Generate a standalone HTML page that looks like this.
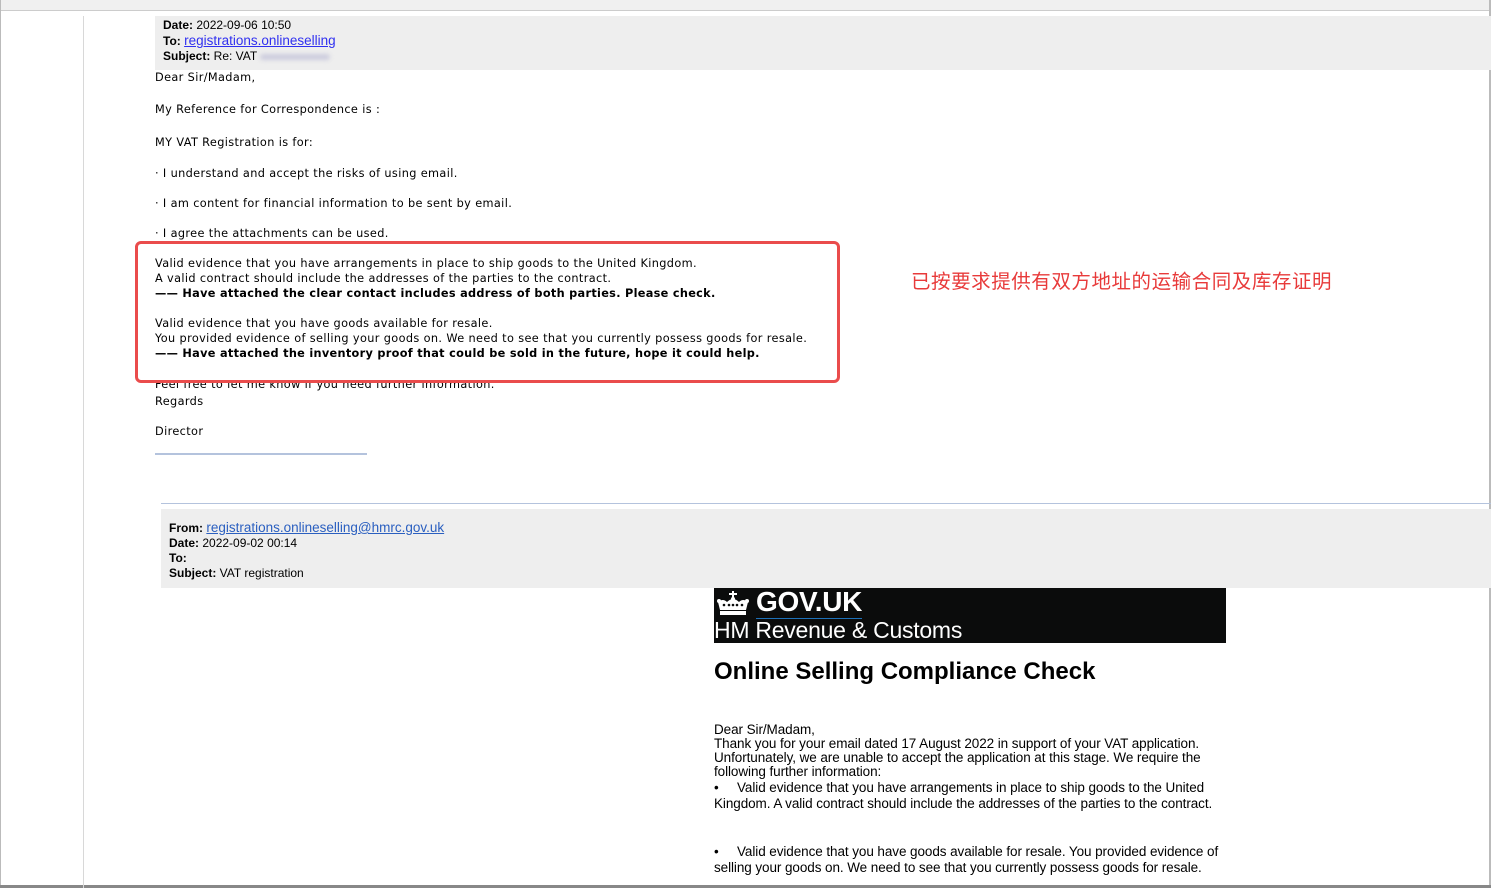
<!DOCTYPE html>
<html><head><meta charset="utf-8"><style>
*{margin:0;padding:0;box-sizing:border-box}
body{width:1491px;height:888px;position:relative;background:#fff;overflow:hidden;font-family:"Liberation Sans",sans-serif;color:#000}
.a{position:absolute;white-space:nowrap}
.t{font-size:12px}
.v{font-family:"DejaVu Sans",sans-serif;font-size:11.3px;letter-spacing:0.37px}
.ar{font-size:13.5px;letter-spacing:-0.08px}
a{text-decoration:underline}
</style></head><body>
<div class="a" style="left:0;top:0;width:1491px;height:10px;background:#f0f0f0"></div>
<div class="a" style="left:0;top:10px;width:1491px;height:1px;background:#ccc"></div>
<div class="a" style="left:0;top:0;width:1px;height:888px;background:#bbb"></div>
<div class="a" style="left:1489px;top:0;width:2px;height:888px;background:#bbb"></div>
<div class="a" style="left:0;top:885px;width:1491px;height:3px;background:#888"></div>
<div class="a" style="left:83px;top:16px;width:1px;height:872px;background:#d8d8d8"></div>
<div class="a" style="left:155px;top:16px;width:1336px;height:54px;background:#eee"></div>
<div class="a t" style="left:163px;top:18px"><b>Date:</b> 2022-09-06 10:50</div>
<div class="a t" style="left:163px;top:33px"><b>To:</b> <a style="color:#3030f0;font-size:13.5px">registrations.onlineselling</a></div>
<div class="a t" style="left:163px;top:49px"><b>Subject:</b> Re: VAT <span style="display:inline-block;width:70px;height:6px;background:#ccd;border-radius:3px;filter:blur(2px)"></span></div>
<div class="a v" style="left:155px;top:71px">Dear Sir/Madam,</div>
<div class="a v" style="left:155px;top:103px">My Reference for Correspondence is :</div>
<div class="a v" style="left:155px;top:136px">MY VAT Registration is for:</div>
<div class="a v" style="left:155px;top:167px">· I understand and accept the risks of using email.</div>
<div class="a v" style="left:155px;top:197px">· I am content for financial information to be sent by email.</div>
<div class="a v" style="left:155px;top:227px">· I agree the attachments can be used.</div>
<div class="a v" style="left:155px;top:378px">Feel free to let me know if you need further information.</div>
<div class="a" style="left:135px;top:241px;width:705px;height:142px;border:3px solid #ea4c4c;border-radius:6px;background:#fff"></div>
<div class="a v" style="left:155px;top:257px">Valid evidence that you have arrangements in place to ship goods to the United Kingdom.</div>
<div class="a v" style="left:155px;top:272px">A valid contract should include the addresses of the parties to the contract.</div>
<div class="a v" style="left:155px;top:287px;font-weight:bold;letter-spacing:0.3px">—— Have attached the clear contact includes address of both parties. Please check.</div>
<div class="a v" style="left:155px;top:317px">Valid evidence that you have goods available for resale.</div>
<div class="a v" style="left:155px;top:332px">You provided evidence of selling your goods on. We need to see that you currently possess goods for resale.</div>
<div class="a v" style="left:155px;top:347px;font-weight:bold;letter-spacing:0.3px">—— Have attached the inventory proof that could be sold in the future, hope it could help.</div>
<div class="a" style="left:911px;top:265px;font-family:'Liberation Sans','Noto Sans CJK SC',sans-serif;font-size:19.5px;letter-spacing:0.55px;color:#e83a3a">已按要求提供有双方地址的运输合同及库存证明</div>
<div class="a v" style="left:155px;top:395px">Regards</div>
<div class="a v" style="left:155px;top:425px">Director</div>
<div class="a" style="left:155px;top:453px;width:212px;height:2px;background:#b4c3dd"></div>
<div class="a" style="left:161px;top:503px;width:1330px;height:1px;background:#b4c3dd"></div>
<div class="a" style="left:161px;top:509px;width:1330px;height:79px;background:#eee"></div>
<div class="a t" style="left:169px;top:520px"><b>From:</b> <a style="color:#2a5fc0;font-size:13.5px">registrations.onlineselling@hmrc.gov.uk</a></div>
<div class="a t" style="left:169px;top:536px"><b>Date:</b> 2022-09-02 00:14</div>
<div class="a t" style="left:169px;top:551px"><b>To:</b></div>
<div class="a t" style="left:169px;top:566px"><b>Subject:</b> VAT registration</div>
<div class="a" style="left:714px;top:588px;width:512px;height:55px;background:#0b0c0c"></div>
<svg class="a" style="left:715px;top:590px" width="36" height="26" viewBox="0 0 36 26">
<g fill="#fff"><rect x="17" y="1" width="2" height="8"/><rect x="14" y="3" width="8" height="2"/>
<path d="M3 12 Q8 8 12 12 Q18 6 24 12 Q28 8 33 12 L31 20 L5 20 Z"/><rect x="5" y="21" width="26" height="4"/>
<circle cx="4" cy="11" r="2"/><circle cx="32" cy="11" r="2"/><circle cx="18" cy="9" r="2"/></g>
<g fill="#0b0c0c"><circle cx="9" cy="15" r="1.3"/><circle cx="14" cy="15" r="1.3"/><circle cx="22" cy="15" r="1.3"/><circle cx="27" cy="15" r="1.3"/><circle cx="18" cy="15" r="1.3"/></g></svg>
<div class="a" style="left:756px;top:586px;color:#fff;font-size:28px;font-weight:bold;letter-spacing:-0.3px;border-bottom:1px solid #1d70b8;line-height:32px">GOV.UK</div>
<div class="a" style="left:714px;top:617px;color:#fff;font-size:23px;letter-spacing:-0.25px">HM Revenue &amp; Customs</div>
<div class="a" style="left:714px;top:658px;font-size:24px;font-weight:bold;letter-spacing:0px">Online Selling Compliance Check</div>
<div class="a ar" style="left:714px;top:722px">Dear Sir/Madam,</div>
<div class="a ar" style="left:714px;top:736px">Thank you for your email dated 17 August 2022 in support of your VAT application.</div>
<div class="a ar" style="left:714px;top:750px">Unfortunately, we are unable to accept the application at this stage. We require the</div>
<div class="a ar" style="left:714px;top:764px">following further information:</div>
<div class="a ar" style="left:714px;top:780px">•&nbsp;&nbsp;&nbsp;&nbsp; Valid evidence that you have arrangements in place to ship goods to the United</div>
<div class="a ar" style="left:714px;top:796px">Kingdom. A valid contract should include the addresses of the parties to the contract.</div>
<div class="a ar" style="left:714px;top:844px">•&nbsp;&nbsp;&nbsp;&nbsp; Valid evidence that you have goods available for resale. You provided evidence of</div>
<div class="a ar" style="left:714px;top:860px">selling your goods on. We need to see that you currently possess goods for resale.</div>
</body></html>
